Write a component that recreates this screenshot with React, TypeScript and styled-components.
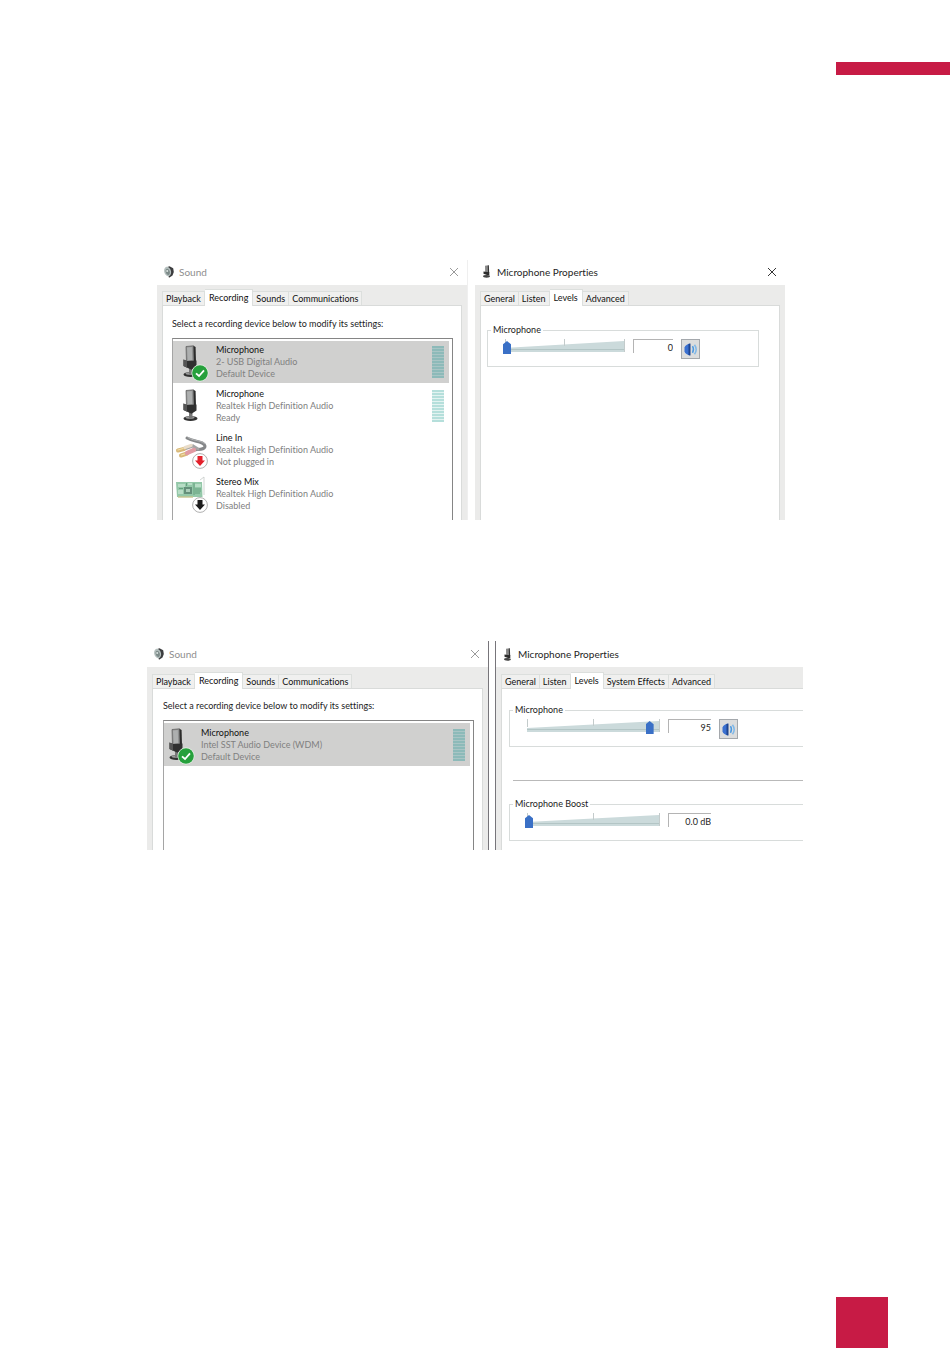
import React, { useState } from 'react';
import styled, { createGlobalStyle, css } from 'styled-components';

const GlobalStyle = createGlobalStyle`
  *, *::before, *::after { box-sizing: border-box; }
  body {
    margin: 0;
    background: #fff;
    color: #1c1c1c;
    font-family: Lato, "Open Sans", sans-serif;
    font-size: 9px;
    line-height: 12px;
    font-variant-ligatures: none;
  }
  button, input { font: inherit; color: inherit; }
`;

const accent = '#c71b45';
const chrome = '#ebebea';

/* ---------- page ---------- */

const Page = styled.div`
  min-height: 100vh;
  display: flex;
  flex-direction: column;
`;

const HeaderBar = styled.header`
  align-self: flex-end;
  width: 12%;
  height: 13px;
  margin-top: 62px;
  background: ${accent};
`;

const Main = styled.main`
  display: flex;
  flex-direction: column;
  gap: 121px;
  padding: 185px 147px 60px;
`;

const Figure = styled.section<{ $columns: string; $inset?: boolean; $height: number }>`
  display: grid;
  grid-template-columns: ${p => p.$columns};
  min-height: ${p => p.$height}px;
  ${p => p.$inset && css`
    column-gap: 7px;
    margin: 0 18px 0 10px;
  `}
`;

const Seam = styled.div`
  border: solid #77757a;
  border-width: 0 1px;
`;

const FooterBlock = styled.footer`
  align-self: flex-end;
  width: 52px;
  height: 51px;
  margin: auto 62px 0 0;
  background: ${accent};
`;

/* ---------- dialog chrome ---------- */

const Dialog = styled.section<{ $edge?: boolean }>`
  display: flex;
  flex-direction: column;
  min-width: 0;
  ${p => p.$edge && css`border-right: 1px solid #efefef;`}
`;

const TitleBar = styled.header<{ $muted?: boolean; $large?: boolean }>`
  display: flex;
  align-items: center;
  gap: 5px;
  height: ${p => (p.$large ? 26 : 25)}px;
  padding: 0 9px ${p => (p.$large ? 0 : 2)}px 7px;
  color: ${p => (p.$muted ? '#8e8e8e' : '#1e1e1e')};
`;

const Title = styled.h2`
  flex: 1;
  margin: 0;
  font-size: 10px;
  font-weight: 400;
  line-height: 14px;
`;

const CloseButton = styled.button`
  display: flex;
  padding: 0;
  border: 0;
  background: none;
`;

const Body = styled.div<{ $open?: boolean }>`
  flex: 1;
  display: flex;
  flex-direction: column;
  padding: 0 ${p => (p.$open ? 0 : 5)}px 0 5px;
  background: ${chrome};
`;

const Tab = styled.button<{ $active: boolean }>`
  height: 14px;
  padding: 1px 3px 0;
  border: 1px solid #dcdfdd;
  border-width: 1px 1px 0 0;
  background: #f0f0ef;
  line-height: 12px;
  white-space: nowrap;
  color: #111;
  &:first-child { border-left-width: 1px; }
  ${p => p.$active && css`
    height: 17px;
    margin-bottom: -1px;
    padding: 0 4px 1px;
    background: #fff;
    z-index: 1;
  `}
`;

const TabList = styled.div<{ $large?: boolean }>`
  display: flex;
  align-items: flex-end;
  height: ${p => (p.$large ? 21 : 20)}px;
`;

const Panel = styled.div<{ $open?: boolean }>`
  flex: 1;
  display: flex;
  flex-direction: column;
  border: 1px solid #d9dbda;
  border-width: 1px ${p => (p.$open ? 0 : 1)}px 0 1px;
  background: #fff;
`;

/* ---------- recording list ---------- */

const Prompt = styled.p<{ $large?: boolean }>`
  margin: 0;
  padding: ${p => (p.$large ? '11px 10px 8px' : '12px 9px 8px')};
`;

const DeviceList = styled.ul<{ $large?: boolean }>`
  flex: 1;
  display: flex;
  flex-direction: column;
  gap: 2px;
  margin: 0 8px 0 ${p => (p.$large ? 10 : 9)}px;
  padding: 2px 3px 0 0;
  border: solid #858585;
  border-width: 1px 1px 0;
  border-left-color: #a5a5a5;
  list-style: none;
`;

const DeviceRow = styled.li<{ $selected?: boolean; $large?: boolean }>`
  display: flex;
  align-items: center;
  gap: ${p => (p.$large ? 5 : 6)}px;
  height: ${p => (p.$large ? 43 : 42)}px;
  padding: 0 5px 0 ${p => (p.$large ? 0 : 5)}px;
  background: ${p => (p.$selected ? '#d0d0cf' : 'transparent')};
`;

const DeviceText = styled.div`
  flex: 1;
  color: #808080;
`;

const DeviceName = styled.strong`
  display: block;
  font-weight: 400;
  color: #111;
`;

const DeviceLine = styled.span`
  display: block;
`;

const MeterBox = styled.div<{ $dim?: boolean }>`
  display: flex;
  flex-direction: column;
  gap: 1px;
  width: 12px;
  background: ${p => (p.$dim ? '#a9c5c5' : '#e3f3f1')};
`;

const MeterBar = styled.span<{ $dim?: boolean }>`
  height: 2px;
  background: ${p => (p.$dim ? '#8dbab9' : '#b5dfdb')};
`;

const IconSvg = styled.svg`
  display: block;
  flex: none;
  overflow: visible;
`;

/* ---------- levels ---------- */

const LevelsArea = styled.div<{ $open?: boolean }>`
  display: flex;
  flex-direction: column;
  padding: ${p => (p.$open ? '15px 0 0 7px' : '18px 20px 0 6px')};
`;

const Group = styled.fieldset<{ $open?: boolean }>`
  min-width: 0;
  margin: 0;
  padding: 3px 0 7px 15px;
  border: 1px solid #d8dcdb;
  ${p => p.$open && css`border-right: 0;`}
`;

const GroupLegend = styled.legend`
  margin-left: -12px;
  padding: 0 2px;
`;

const LevelRow = styled.div`
  display: flex;
  align-items: flex-start;
  gap: 8px;
  min-height: 20px;
`;

const SliderStack = styled.div<{ $width: number }>`
  display: grid;
  width: ${p => p.$width}px;
  height: 16px;
  & > * { grid-area: 1 / 1; }
`;

const Range = styled.input`
  appearance: none;
  width: 100%;
  height: 13px;
  margin: 2px 0 0;
  background: transparent;
  &::-webkit-slider-thumb {
    appearance: none;
    width: 8px;
    height: 13px;
    background: #3a70c6;
    clip-path: polygon(50% 0, 100% 25%, 100% 100%, 0 100%, 0 25%);
  }
`;

const ValueBox = styled.input<{ $width: number }>`
  width: ${p => p.$width}px;
  height: 14px;
  padding: 1px 0 0;
  border: solid #b4b4b4;
  border-width: 1px 0 0 1px;
  border-radius: 0;
  background: #fff;
  line-height: 12px;
  text-align: right;
`;

const MuteButton = styled.button`
  display: grid;
  place-items: center;
  width: 19px;
  height: 20px;
  padding: 0;
  border: 1px solid #a4a8ac;
  background: #dcdddd;
`;

const Divider = styled.hr`
  width: calc(100% - 4px);
  margin: 33px 0 17px 4px;
  border: 0;
  border-top: 1px solid #b9b9b9;
`;

/* ---------- drawings ---------- */

const CloseIcon = () => (
  <svg width="8" height="10" viewBox="0 0 8 10" fill="none" stroke="currentColor" strokeWidth="0.9">
    <path d="M0 1l8 8M8 1l-8 8" />
  </svg>
);

const SpeakerIcon = () => (
  <svg width="10" height="12" viewBox="0 0 10 12">
    <path d="M2 1.500 5.500 .3l3.700 2 .6 3.700-1.300 3.500L5 11.700z" fill="#3c3d3f" />
    <ellipse cx="3.600" cy="5.500" rx="3.400" ry="4.800" fill="#b4bfbe" transform="rotate(-14 3.600 5.500)" />
    <ellipse cx="3.700" cy="5.800" rx="2" ry="3.200" fill="#7d8b89" transform="rotate(-14 3.700 5.800)" />
    <circle cx="3.200" cy="5" r="1" fill="#d9e2e0" />
  </svg>
);

const SmallMicIcon = () => (
  <svg width="10" height="13" viewBox="0 0 10 13">
    <path d="M3 .8 6.600.3 7 7.500 3.200 8z" fill="#888" />
    <path d="M5.800.4 6.800.3 7.200 8H6z" fill="#333" />
    <path d="M1.500 6.500 7.300 7.300V10H5L1.500 8.800z" fill="#2d2d2d" />
    <ellipse cx="4.500" cy="11.300" rx="3.500" ry="1.400" fill="#444" />
  </svg>
);

const Mic = () => (
  <g>
    <ellipse cx="17.500" cy="33.500" rx="7" ry="2.600" fill="#313131" />
    <ellipse cx="17" cy="32.500" rx="4.500" ry="1.300" fill="#999" />
    <path d="M16 27h3.500v6H16z" fill="#777" />
    <path d="M13 5.500 20.500 4.800 21 21l-7.500 1z" fill="#8f9090" stroke="#5a5a5a" strokeWidth=".7" />
    <path d="M14 6.500 18.800 6 19.200 19l-4.500.6z" fill="#adafaf" />
    <path d="M20.500 4.800 22.600 6 23 21l-2 1z" fill="#2b2b2b" />
    <path d="M10.500 18.500 14 20 23.500 19.500v6l-5 3.200L10.500 25z" fill="#303030" />
    <path d="M10.500 18.500 14 20v6.700L10.500 25z" fill="#555" />
  </g>
);

const Cable = () => (
  <g fill="none" strokeLinecap="round">
    <path d="M14 9c7 4 17 3 18 8 0 4-6 3-12 4" stroke="#858789" strokeWidth="3" />
    <path d="M15 8.600c7 4 15 3 16.500 6" stroke="#b4b6b7" strokeWidth="1" />
    <path d="M11 20l9-3 5 3" stroke="#a5a5a5" strokeWidth="3" />
    <path d="M5 21.500l6-1.500M8 26.500l6-2" stroke="#d8b878" strokeWidth="4" />
    <path d="M12 18.500l6-2" stroke="#e9dcc9" strokeWidth="3.400" />
    <path d="M14 24l7-3" stroke="#e09aa2" strokeWidth="4.400" />
    <path d="M5 21l5-1.500M8.500 26l3-1" stroke="#f2dfab" strokeWidth="1.200" />
  </g>
);

const Card = () => (
  <g>
    <path d="M27 7l4-3v18" fill="none" stroke="#c5cac8" strokeWidth=".8" />
    <path d="M3 9h26l.5 15H4z" fill="#94c8a9" />
    <path d="M5 11h7v3H5zM15 10h4v2h-4zM22 11h6v3h-6zM5 17h5v4H5z" fill="#b8ddc6" />
    <path d="M11 14h8v7h-8z" fill="#648f7a" />
    <path d="M13 16h4v3h-4z" fill="#a9cdb8" />
    <path d="M22 16h6M22 18h6M22 20h5M6 15.500h4M13.500 10v3M21 10v12" stroke="#5f9c79" strokeWidth=".9" />
    <path d="M5 24h15" stroke="#c6c58e" strokeWidth="1.400" />
  </g>
);

const CheckBadge = () => (
  <g>
    <circle cx="27" cy="32" r="8.500" fill="#e9f2e9" />
    <circle cx="27" cy="32" r="7.800" fill="#26a03c" />
    <path d="M23 32.300 26 35l5-5.600" fill="none" stroke="#fff" strokeWidth="1.800" />
  </g>
);

const ArrowBadge = ({ color }: { color: string }) => (
  <g>
    <circle cx="27" cy="32" r="7.400" fill="#fff" stroke="#a7a7a7" strokeWidth=".9" />
    <path d="M24.500 27h5v4.500h2.500l-5 5.500-5-5.500h2.500z" fill={color} />
  </g>
);

const VolumeIcon = () => (
  <svg width="15" height="15" viewBox="0 0 15 15">
    <path d="M1.500 5.500C2 3.500 4.500 2 7 1.500v12C4.500 13 2 11.500 1.500 9.500z" fill="#3a70d0" />
    <path d="M5.500 2 7.500 1.500v12l-2-.5z" fill="#1f448e" />
    <path d="M9.500 4.200c1.200 2 1.200 4.600 0 6.600" fill="none" stroke="#4d9ae2" strokeWidth="1.400" />
    <path d="M11.500 2.700c2 2.800 2 6.800 0 9.600" fill="none" stroke="#7fb8e8" strokeWidth="1.500" />
  </svg>
);

const Wedge = ({ width }: { width: number }) => (
  <svg width={width} height="16" viewBox={`0 0 ${width} 16`}>
    <path d={`M2 9 ${width - 1} 2v11H2z`} fill="#cbdadb" />
    <path d={`M2 10.500H${width - 1}`} stroke="#b3c5c5" />
    <path d={`M2.500 0v8M${Math.round(width / 2)}.500 0v7M${width - 1}.500 0v13`} stroke="#c3cbcb" />
  </svg>
);

/* ---------- composed parts ---------- */

type Device = {
  name: string;
  driver: string;
  status: string;
  kind: 'mic' | 'line' | 'card';
  badge?: 'check' | 'red' | 'black';
  selected?: boolean;
  meter?: boolean;
};

const DeviceIcon = ({ kind, badge }: Pick<Device, 'kind' | 'badge'>) => (
  <IconSvg width="32" height="42" viewBox="5 0 32 42" aria-hidden="true">
    {kind === 'mic' && <Mic />}
    {kind === 'line' && <Cable />}
    {kind === 'card' && <Card />}
    {badge === 'check' && <CheckBadge />}
    {badge === 'red' && <ArrowBadge color="#e3202b" />}
    {badge === 'black' && <ArrowBadge color="#1c1c1c" />}
  </IconSvg>
);

const Meter = ({ dim }: { dim?: boolean }) => (
  <MeterBox $dim={dim}>
    {Array.from({ length: 11 }, (_, i) => <MeterBar key={i} $dim={dim} />)}
  </MeterBox>
);

const Tabs = ({ names, initial, large }: { names: string[]; initial: string; large?: boolean }) => {
  const [current, setCurrent] = useState(initial);
  return (
    <TabList role="tablist" $large={large}>
      {names.map(name => (
        <Tab
          key={name}
          type="button"
          role="tab"
          aria-selected={name === current}
          $active={name === current}
          onClick={() => setCurrent(name)}
        >
          {name}
        </Tab>
      ))}
    </TabList>
  );
};

const SoundDialog = ({ devices, large }: { devices: Device[]; large?: boolean }) => (
  <Dialog $edge={!large}>
    <TitleBar $muted $large={large}>
      <SpeakerIcon />
      <Title>Sound</Title>
      <CloseButton type="button" aria-label="Close"><CloseIcon /></CloseButton>
    </TitleBar>
    <Body>
      <Tabs names={['Playback', 'Recording', 'Sounds', 'Communications']} initial="Recording" large={large} />
      <Panel>
        <Prompt $large={large}>Select a recording device below to modify its settings:</Prompt>
        <DeviceList $large={large}>
          {devices.map(d => (
            <DeviceRow key={d.name + d.driver} $selected={d.selected} $large={large}>
              <DeviceIcon kind={d.kind} badge={d.badge} />
              <DeviceText>
                <DeviceName>{d.name}</DeviceName>
                <DeviceLine>{d.driver}</DeviceLine>
                <DeviceLine>{d.status}</DeviceLine>
              </DeviceText>
              {d.meter && <Meter dim={d.selected} />}
            </DeviceRow>
          ))}
        </DeviceList>
      </Panel>
    </Body>
  </Dialog>
);

type LevelProps = {
  label: string;
  start: number;
  format?: (v: number) => string;
  mute?: boolean;
  width: number;
  boxWidth: number;
  open?: boolean;
};

const Level = ({ label, start, format = String, mute, width, boxWidth, open }: LevelProps) => {
  const [value, setValue] = useState(start);
  return (
    <Group $open={open}>
      <GroupLegend>{label}</GroupLegend>
      <LevelRow>
        <SliderStack $width={width}>
          <Wedge width={width} />
          <Range
            type="range"
            aria-label={`${label} level`}
            value={value}
            onChange={e => setValue(Number(e.target.value))}
          />
        </SliderStack>
        <ValueBox $width={boxWidth} aria-label={`${label} value`} value={format(value)} readOnly />
        {mute && <MuteButton type="button" aria-label="Mute"><VolumeIcon /></MuteButton>}
      </LevelRow>
    </Group>
  );
};

const usbDevices: Device[] = [
  { name: 'Microphone', driver: '2- USB Digital Audio', status: 'Default Device', kind: 'mic', badge: 'check', selected: true, meter: true },
  { name: 'Microphone', driver: 'Realtek High Definition Audio', status: 'Ready', kind: 'mic', meter: true },
  { name: 'Line In', driver: 'Realtek High Definition Audio', status: 'Not plugged in', kind: 'line', badge: 'red' },
  { name: 'Stereo Mix', driver: 'Realtek High Definition Audio', status: 'Disabled', kind: 'card', badge: 'black' },
];

const intelDevices: Device[] = [
  { name: 'Microphone', driver: 'Intel SST Audio Device (WDM)', status: 'Default Device', kind: 'mic', badge: 'check', selected: true, meter: true },
];

export default function App() {
  return (
    <>
      <GlobalStyle />
      <Page>
        <HeaderBar />
        <Main>
          <Figure $columns="311fr 310fr" $height={260} $inset>
            <SoundDialog devices={usbDevices} />
            <Dialog>
              <TitleBar>
                <SmallMicIcon />
                <Title>Microphone Properties</Title>
                <CloseButton type="button" aria-label="Close"><CloseIcon /></CloseButton>
              </TitleBar>
              <Body>
                <Tabs names={['General', 'Listen', 'Levels', 'Advanced']} initial="Levels" />
                <Panel>
                  <LevelsArea>
                    <Level label="Microphone" start={0} mute width={122} boxWidth={40} />
                  </LevelsArea>
                </Panel>
              </Body>
            </Dialog>
          </Figure>

          <Figure $columns="341fr 8px 307fr" $height={209}>
            <SoundDialog devices={intelDevices} large />
            <Seam />
            <Dialog>
              <TitleBar $large>
                <SmallMicIcon />
                <Title>Microphone Properties</Title>
              </TitleBar>
              <Body $open>
                <Tabs names={['General', 'Listen', 'Levels', 'System Effects', 'Advanced']} initial="Levels" large />
                <Panel $open>
                  <LevelsArea $open>
                    <Level label="Microphone" start={95} mute width={135} boxWidth={43} open />
                    <Divider />
                    <Level label="Microphone Boost" start={0} format={v => `${v.toFixed(1)} dB`} width={135} boxWidth={43} open />
                  </LevelsArea>
                </Panel>
              </Body>
            </Dialog>
          </Figure>
        </Main>
        <FooterBlock />
      </Page>
    </>
  );
}
